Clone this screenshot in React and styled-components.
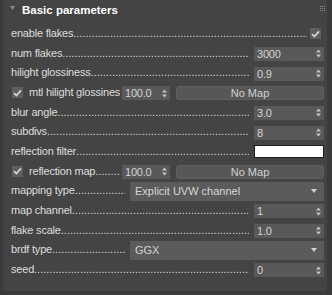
import React from "react";
import styled, { createGlobalStyle } from "styled-components";

const Global = createGlobalStyle`
  html, body { margin: 0; padding: 0; background: #3a3a3a; }
  body { font-family: "Liberation Sans", Arial, sans-serif; font-size: 11px; }
`;

const Panel = styled.div`
  margin-left: 3px;
  width: 324px;
  height: 291px;
  background: #444444;
  box-sizing: border-box;
  border-radius: 0 0 2px 2px;
  overflow: hidden;
`;

const Header = styled.div`
  height: 24px;
  display: flex;
  align-items: flex-start;
  padding: 3px 2px 0 7px;
  box-sizing: border-box;
`;

const Caret = styled.svg`
  width: 5px;
  height: 4px;
  margin-top: 3px;
  flex: none;
`;

const Title = styled.span`
  margin-left: 7px;
  flex: 1;
  color: #ffffff;
  font-weight: bold;
  font-size: 11.5px;
  line-height: 14px;
`;

const Grip = styled.div`
  margin-top: 3px;
  display: grid;
  grid-template-columns: repeat(3, 1px);
  grid-auto-rows: 1px;
  gap: 1px;
  & > i { background: #8c8c8c; display: block; }
`;

const Rows = styled.div`
  display: grid;
  grid-template-columns: minmax(0, 1fr);
  grid-auto-rows: 19.67px;
`;

const Row = styled.div`
  display: flex;
  align-items: center;
  min-width: 0;
  padding: 0 3px 0 8px;
  line-height: 19.67px;
`;

const Label = styled.span`
  flex: ${(p) => (p.$width ? `0 0 ${p.$width}px` : "1 1 0")};
  min-width: 0;
  overflow: hidden;
  white-space: nowrap;
  color: #dedede;
  letter-spacing: -0.2px;
  margin-left: ${(p) => p.$ml || 0}px;
  &::after {
    content: "....................................................................................................................";
    letter-spacing: 0;
  }
`;

const CheckBox = styled.div`
  flex: none;
  width: 11px;
  height: 11px;
  background: #5e5e5e;
  display: flex;
  align-items: center;
  justify-content: center;
  margin-left: ${(p) => p.$ml || 0}px;
  margin-right: ${(p) => p.$mr || 0}px;
`;

const Spinner = styled.div`
  flex: none;
  width: ${(p) => p.$w}px;
  height: 14px;
  margin-left: ${(p) => p.$ml}px;
  margin-top: 1px;
  background: #595959;
  box-sizing: border-box;
  display: flex;
  align-items: center;
  padding: 0 3px 0 3px;
  color: #d4d4d4;
  letter-spacing: -0.2px;
  line-height: 14px;
  & > span { flex: 1; }
`;

const Swatch = styled.div`
  flex: none;
  width: 70px;
  height: 13px;
  margin-left: 5px;
  background: #ffffff;
  border: 1px solid #1e1e1e;
  box-sizing: border-box;
`;

const MapButton = styled.div`
  flex: 1;
  height: 14px;
  margin-left: 6px;
  margin-top: 1px;
  background: #575757;
  border: 1px solid #5f5f5f;
  border-radius: 3px;
  box-sizing: border-box;
  color: #d2d2d2;
  text-align: center;
  line-height: 12px;
`;

const Dropdown = styled.div`
  flex: none;
  width: 194px;
  height: 19px;
  margin-left: 5px;
  background: #5b5b5b;
  box-sizing: border-box;
  display: flex;
  align-items: center;
  padding: 0 7px 0 5px;
  color: #d6d6d6;
  line-height: 19px;
  & > span { flex: 1; }
`;

const Check = () => (
  <svg width="9" height="8" viewBox="0 0 9 8">
    <path d="M1 4.2 L3.4 6.6 L8 1.4" fill="none" stroke="#d6d6d6" strokeWidth="1.7" />
  </svg>
);

const Arrows = () => (
  <svg width="5" height="9" viewBox="0 0 5 9">
    <path d="M0 3.6 L2.5 0.6 L5 3.6 Z M0 5.4 L2.5 8.4 L5 5.4 Z" fill="#c4c4c4" />
  </svg>
);

const DownArrow = () => (
  <svg width="6" height="4" viewBox="0 0 6 4">
    <path d="M0 0 L6 0 L3 4 Z" fill="#d0d0d0" />
  </svg>
);

const SpinBox = ({ value, w = 70, ml = 5 }) => (
  <Spinner $w={w} $ml={ml}>
    <span>{value}</span>
    <Arrows />
  </Spinner>
);

export default function App() {
  return (
    <>
      <Global />
      <Panel>
        <Header>
          <Caret viewBox="0 0 5 4">
            <path d="M0 0 L5 0 L2.5 4 Z" fill="#8a8a8a" />
          </Caret>
          <Title>Basic parameters</Title>
          <Grip>
            {Array.from({ length: 9 }).map((_, i) => (
              <i key={i} />
            ))}
          </Grip>
        </Header>
        <Rows>
          <Row>
            <Label>enable flakes</Label>
            <CheckBox $ml={3} $mr={3}>
              <Check />
            </CheckBox>
          </Row>
          <Row>
            <Label>num flakes</Label>
            <SpinBox value="3000" />
          </Row>
          <Row>
            <Label>hilight glossiness</Label>
            <SpinBox value="0.9" />
          </Row>
          <Row>
            <CheckBox $ml={1}>
              <Check />
            </CheckBox>
            <Label $width={91} $ml={6}>mtl hilight glossiness</Label>
            <SpinBox value="100.0" w={48} ml={2} />
            <MapButton>No Map</MapButton>
          </Row>
          <Row>
            <Label>blur angle</Label>
            <SpinBox value="3.0" />
          </Row>
          <Row>
            <Label>subdivs</Label>
            <SpinBox value="8" />
          </Row>
          <Row>
            <Label>reflection filter</Label>
            <Swatch />
          </Row>
          <Row>
            <CheckBox $ml={1}>
              <Check />
            </CheckBox>
            <Label $width={91} $ml={6}>reflection map</Label>
            <SpinBox value="100.0" w={48} ml={2} />
            <MapButton>No Map</MapButton>
          </Row>
          <Row>
            <Label>mapping type</Label>
            <Dropdown>
              <span>Explicit UVW channel</span>
              <DownArrow />
            </Dropdown>
          </Row>
          <Row>
            <Label>map channel</Label>
            <SpinBox value="1" />
          </Row>
          <Row>
            <Label>flake scale</Label>
            <SpinBox value="1.0" />
          </Row>
          <Row>
            <Label>brdf type</Label>
            <Dropdown>
              <span>GGX</span>
              <DownArrow />
            </Dropdown>
          </Row>
          <Row>
            <Label>seed</Label>
            <SpinBox value="0" />
          </Row>
        </Rows>
      </Panel>
    </>
  );
}
